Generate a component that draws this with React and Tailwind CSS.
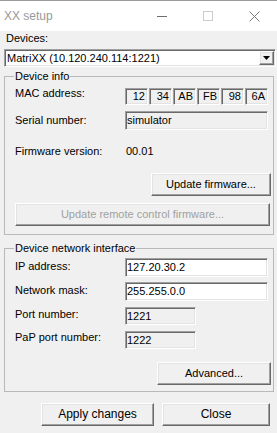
import React from "react";

const sunken =
  "border border-t-[#a0a0a0] border-l-[#a0a0a0] border-r-white border-b-white shadow-[inset_1px_1px_0_#696969,inset_-1px_-1px_0_#e3e3e3]";
const raised =
  "border border-t-white border-l-white border-r-[#696969] border-b-[#696969] shadow-[inset_-1px_-1px_0_#a0a0a0,inset_1px_1px_0_#e3e3e3] bg-[#f0f0f0]";

const Button = ({ text, className = "", disabled = false }) => (
  <div
    className={`${raised} flex h-[23px] items-center justify-center ${
      disabled ? "text-[#a0a0a0]" : "text-black"
    } ${className}`}
  >
    {text}
  </div>
);

const Group = ({ title, className = "", children }) => (
  <div className={`relative w-[270px] border border-[#b9b9b9] ${className}`}>
    {/* group caption sits on the top border */}
    <span className="absolute -top-[7px] left-[9px] bg-[#f0f0f0] px-[1px] leading-[13px]">
      {title}
    </span>
    {children}
  </div>
);

const macParts = ["12", "34", "AB", "FB", "98", "6A"];

export default function App() {
  return (
    <div
      className="flex h-[433px] w-[277px] flex-col overflow-hidden bg-[#f0f0f0] text-[11px] leading-[13px] text-black"
      style={{ fontFamily: '"Liberation Sans", Arial, sans-serif' }}
    >
      {/* Title bar */}
      <div className="flex h-[31px] shrink-0 items-center border-t border-[#9a9a9a] bg-white">
        <span className="pl-[4px] text-[12px] text-[#999999]">XX setup</span>
        <div className="ml-auto flex h-full">
          <div className="flex w-[46px] items-center justify-center">
            <svg width="10" height="10" viewBox="0 0 10 10">
              <line x1="0" y1="5.5" x2="10" y2="5.5" stroke="#6e6e6e" strokeWidth="1" />
            </svg>
          </div>
          <div className="flex w-[46px] items-center justify-center">
            <svg width="10" height="10" viewBox="0 0 10 10">
              <rect x="0.5" y="0.5" width="9" height="9" fill="none" stroke="#cccccc" strokeWidth="1" />
            </svg>
          </div>
          <div className="flex w-[46px] items-center justify-center">
            <svg width="11" height="11" viewBox="0 0 11 11">
              <path d="M0.5 0.5 L10.5 10.5 M10.5 0.5 L0.5 10.5" stroke="#7a7a7a" strokeWidth="1" />
            </svg>
          </div>
        </div>
      </div>

      {/* Body */}
      <div className="flex flex-col pl-[4px]">
        <span className="mt-[1px] pl-[2px]">Devices:</span>

        {/* Devices combo */}
        <div className={`${sunken} mt-[4px] flex h-[18px] w-[272px] items-center bg-white`}>
          <span className="pl-[2px]">MatriXX (10.120.240.114:1221)</span>
          <div className={`${raised} ml-auto mr-[1px] flex h-[14px] w-[15px] items-center justify-center`}>
            <svg width="7" height="4" viewBox="0 0 7 4">
              <path d="M0 0 H7 L3.5 4 Z" fill="#000" />
            </svg>
          </div>
        </div>

        {/* Device info */}
        <Group title="Device info" className="mt-[9px]">
          <div className="flex flex-col pb-[8px] pl-[10px] pr-[2px] pt-[10px]">
            <div className="flex items-start">
              <span className="w-[110px]">MAC address:</span>
              <div className="mt-[1px] flex gap-[1px]">
                {macParts.map((part, index) => (
                  <div
                    key={index}
                    className={`${sunken} flex h-[17px] w-[23px] items-center justify-end pr-[2px]`}
                  >
                    {part}
                  </div>
                ))}
              </div>
            </div>

            <div className="mt-[6px] flex items-start">
              <span className="mt-[3px] w-[110px]">Serial number:</span>
              <div className={`${sunken} flex h-[19px] w-[143px] items-center pl-[1px]`}>
                simulator
              </div>
            </div>

            <div className="mt-[15px] flex">
              <span className="w-[111px]">Firmware version:</span>
              <span>00.01</span>
            </div>

            <Button text="Update firmware..." className="mt-[15px] w-[120px] self-end" />
            <Button
              text="Update remote control firmware..."
              className="mt-[7px] w-[255px]"
              disabled
            />
          </div>
        </Group>

        {/* Device network interface */}
        <Group title="Device network interface" className="mt-[13px]">
          <div className="flex flex-col pb-[6px] pl-[10px] pr-[2px] pt-[9px]">
            <div className="flex items-start">
              <span className="mt-[2px] w-[110px]">IP address:</span>
              <div className={`${sunken} flex h-[19px] w-[143px] items-center bg-white pl-[1px]`}>
                127.20.30.2
              </div>
            </div>
            <div className="mt-[5px] flex items-start">
              <span className="mt-[2px] w-[110px]">Network mask:</span>
              <div className={`${sunken} flex h-[19px] w-[143px] items-center bg-white pl-[1px]`}>
                255.255.0.0
              </div>
            </div>
            <div className="mt-[6px] flex items-start">
              <span className="mt-[1px] w-[110px]">Port number:</span>
              <div className={`${sunken} flex h-[18px] w-[71px] items-center pl-[1px]`}>
                1221
              </div>
            </div>
            <div className="mt-[6px] flex items-start">
              <span className="mt-[0px] w-[110px]">PaP port number:</span>
              <div className={`${sunken} flex h-[18px] w-[71px] items-center pl-[1px]`}>
                1222
              </div>
            </div>

            <Button text="Advanced..." className="mt-[13px] w-[114px] self-end" />
          </div>
        </Group>

        {/* Dialog buttons */}
        <div className="mt-[11px] flex gap-[8px] pl-[37px]">
          <Button text="Apply changes" className="w-[113px] text-[12px]" />
          <Button text="Close" className="w-[108px] text-[12px]" />
        </div>
      </div>
    </div>
  );
}
